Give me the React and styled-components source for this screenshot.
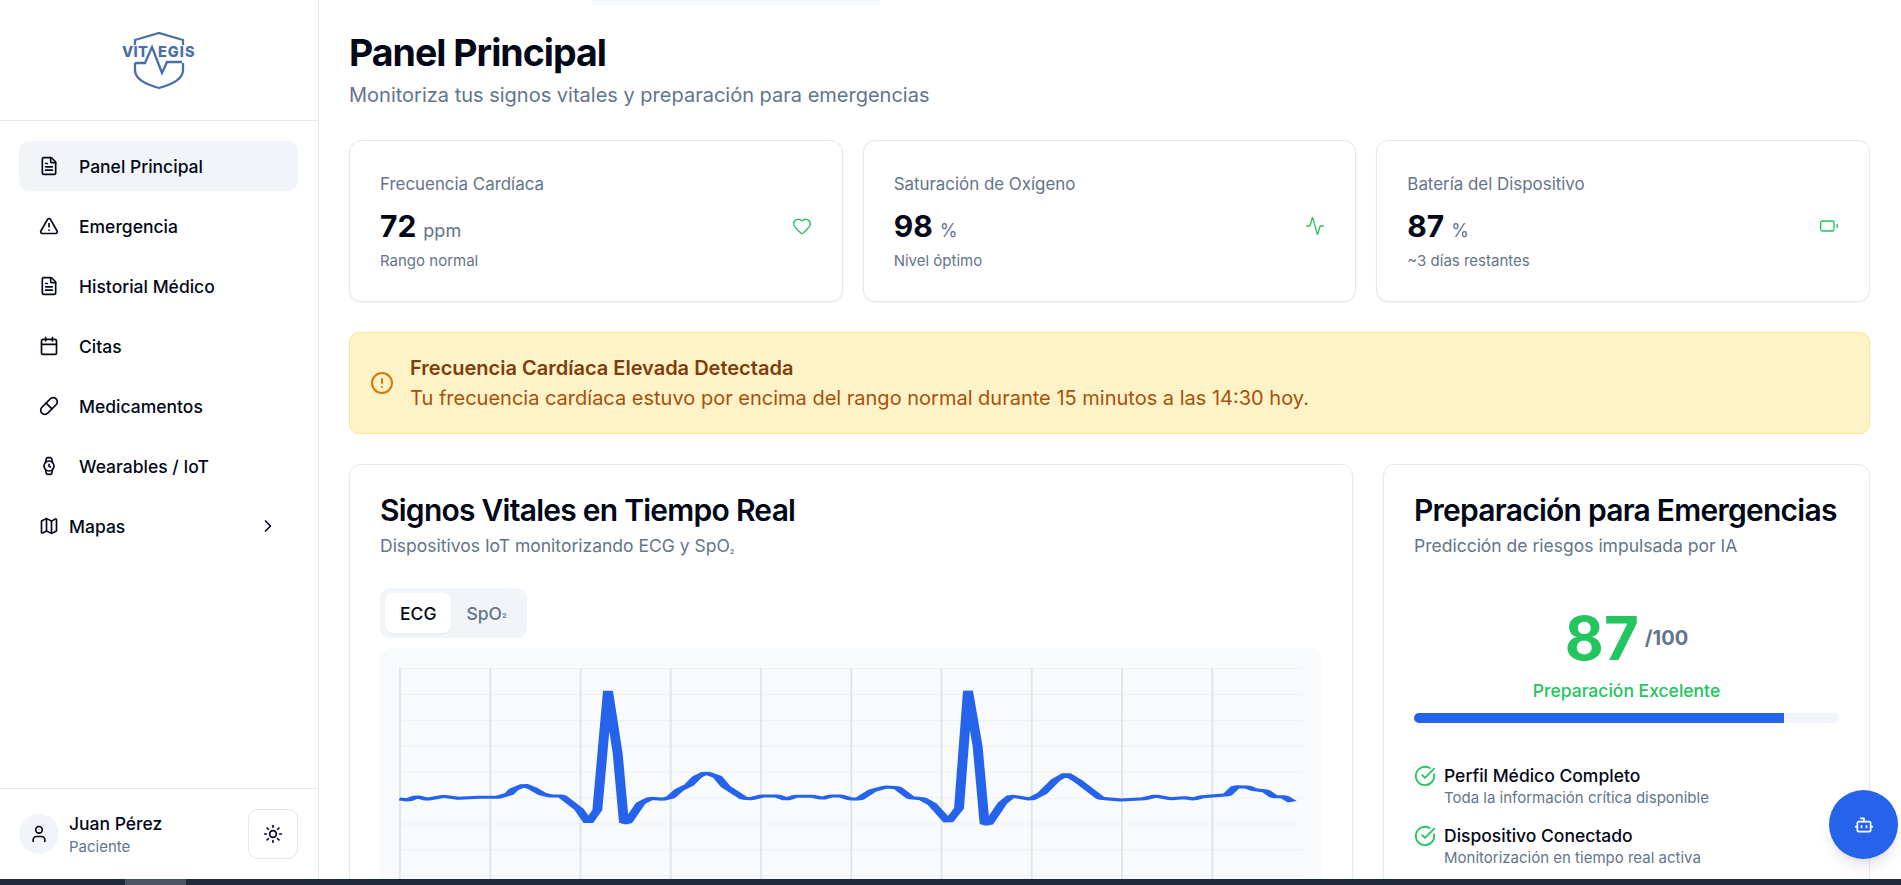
import React from "react";
import styled, { createGlobalStyle } from "styled-components";
import { FileText, TriangleAlert, Calendar, Pill, Watch, Map as MapIcon, ChevronRight, User, Sun, Heart, Activity, Battery, CircleAlert, CircleCheckBig, Bot } from "lucide-react";

const Global = createGlobalStyle`
  * { box-sizing: border-box; }
  html, body { margin: 0; height: 100%; overflow: hidden; background: #fff; }
  body { font-family: Inter, "Noto Sans", sans-serif; color: #020817; }
  #root { height: 100%; }
`;

const Page = styled.div`height: 100vh; display: flex; flex-direction: column; position: relative; overflow: hidden;`;
const Body = styled.div`flex: 1; min-height: 0; display: flex;`;
const BottomBar = styled.div`height: 6px; flex: none; background: #1e293b; padding-left: 125px;`;
const Thumb = styled.div`width: 61px; height: 100%; background: #4b5563;`;

const Sidebar = styled.aside`width: 319px; flex: none; border-right: 1px solid #e2e8f0; display: flex; flex-direction: column;`;
const LogoWrap = styled.div`height: 121px; flex: none; border-bottom: 1px solid #e2e8f0; display: flex; justify-content: center; padding-top: 32px;`;
const Nav = styled.nav`flex: 1; display: flex; flex-direction: column; gap: 10px; padding: 20px 20px 0 19px;`;
const NavItem = styled.div`
  height: 50px; display: flex; align-items: center; gap: ${p => p.$gap || 20}px; padding: 0 20px; border-radius: 10px;
  font-size: 17.5px; font-weight: 500; background: ${p => p.$active ? "#f1f5f9" : "transparent"};
`;
const NavLabel = styled.span`flex: 1;`;
const UserBar = styled.div`height: 91px; flex: none; border-top: 1px solid #e2e8f0; display: flex; align-items: center; justify-content: space-between; padding: 0 20px 0 19px;`;
const UserInfo = styled.div`display: flex; align-items: center; gap: 10px;`;
const Avatar = styled.div`width: 40px; height: 40px; border-radius: 50%; background: #f1f5f9; display: flex; align-items: center; justify-content: center;`;
const UserName = styled.div`margin-top: 2px; font-size: 17.5px; font-weight: 500; line-height: 22px;`;
const UserRole = styled.div`margin-top: 1px; font-size: 15px; line-height: 22px; color: #64748b;`;
const ThemeButton = styled.div`width: 50px; height: 50px; border: 1px solid #e2e8f0; border-radius: 10px; display: flex; align-items: center; justify-content: center;`;

const Main = styled.main`flex: 1; min-width: 0; overflow: hidden; padding: 33px 31px 0 30px;`;
const Title = styled.h1`margin: 0; font-size: 37.5px; line-height: 40px; font-weight: 700; letter-spacing: -1px;`;
const Subtitle = styled.p`margin: 8px 0 31px; font-size: 20px; line-height: 28px; color: #64748b;`;

const Stats = styled.div`display: grid; grid-template-columns: repeat(3, 1fr); gap: 20px;`;
const Card = styled.div`background: #fff; border: 1px solid #e2e8f0; border-radius: 12px; box-shadow: 0 1px 2px rgba(0,0,0,.05); padding: 30px;`;
const StatLabel = styled.div`padding-top: 1px; font-size: 16.9px; line-height: 24px; color: #64748b;`;
const StatRow = styled.div`display: flex; align-items: center; justify-content: space-between; margin-top: 12px;`;
const StatValue = styled.div`display: flex; align-items: baseline; gap: 7px;`;
const StatNumber = styled.span`font-size: 30px; line-height: 36px; font-weight: 700;`;
const StatUnit = styled.span`font-size: 18px; color: #64748b;`;
const StatNote = styled.div`margin-top: 7px; font-size: 15px; line-height: 20px; color: #64748b;`;

const Alert = styled.div`margin-top: 30px; height: 102px; background: #fef3c7; border: 1px solid #fde68a; border-radius: 10px; padding: 20px; display: flex; align-items: center; gap: 16px; color: #d97706;`;
const AlertTitle = styled.div`font-size: 20px; line-height: 30px; font-weight: 600; color: #7f3d0f;`;
const AlertText = styled.div`font-size: 20px; line-height: 30px; color: #a9500c;`;

const Columns = styled.div`margin-top: 30px; display: grid; grid-template-columns: minmax(0, 1fr) 487px; gap: 30px;`;
const SectionTitle = styled.h2`margin: 0; font-size: 30px; line-height: 30px; font-weight: 600; letter-spacing: -0.75px;`;
const SectionSub = styled.p`margin: 9px 0 0; height: 24px; font-size: 17.5px; line-height: 24px; color: #64748b;`;
const Sub2 = styled.span`font-size: 0.6em; line-height: 0;`;

const Tabs = styled.div`display: flex; width: max-content; margin-top: 30px; padding: 5px; height: 50px; background: #f1f5f9; border-radius: 10px;`;
const Tab = styled.div`
  padding: 0 15px; display: flex; align-items: center; border-radius: 8px; font-size: 17.5px; font-weight: 500; white-space: pre;
  color: ${p => p.$active ? "#020817" : "#64748b"}; background: ${p => p.$active ? "#fff" : "transparent"};
  box-shadow: ${p => p.$active ? "0 1px 2px rgba(0,0,0,.05)" : "none"};
`;
const ChartBox = styled.div`margin-top: 10px; background: #f8fafc; border-radius: 12px; padding: 20px 19px;`;
const ChartSvg = styled.svg`display: block; width: 903px; height: 260px;`;

const Score = styled.div`margin-top: 50px; display: flex; align-items: center; justify-content: center; gap: 6px;`;
const ScoreNumber = styled.span`font-size: 60px; line-height: 60px; font-weight: 700; color: #22c55e;`;
const ScoreMax = styled.span`font-size: 20px; line-height: 28px; font-weight: 700; color: #64748b;`;
const ScoreLabel = styled.div`margin-top: 9px; text-align: center; font-size: 17.5px; line-height: 28px; font-weight: 500; color: #22c55e;`;
const Track = styled.div`margin-top: 8px; height: 10px; border-radius: 5px; background: #f1f5f9; overflow: hidden;`;
const Fill = styled.div`height: 100%; background: #2563eb;`;
const CheckList = styled.div`margin-top: 41px; display: flex; flex-direction: column; gap: 16px;`;
const CheckItem = styled.div`display: flex; gap: 8px; color: #22c55e;`;
const CheckIcon = styled.div`height: 24px; display: flex; align-items: center; flex: none;`;
const CheckTitle = styled.div`font-size: 17.5px; line-height: 24px; font-weight: 500; color: #020817;`;
const CheckSub = styled.div`font-size: 15px; line-height: 20px; color: #64748b;`;

const TopStrip = styled.div`position: absolute; top: 0; left: 592px; width: 288px; height: 6px; background: #f5f9fe;`;
const Fab = styled.div`position: absolute; left: 1829px; top: 790px; width: 69px; height: 69px; border-radius: 50%; background: #2563eb; color: #fff; display: flex; align-items: center; justify-content: center; box-shadow: 0 10px 15px -3px rgba(0,0,0,.1), 0 4px 6px -4px rgba(0,0,0,.1);`;

const toZ7 = [[90,657],[118,660],[143,650],[175,658],[225,649],[270,655],[330,652],[385,652],[420,642],[435,628],[465,615],[490,625],[520,642],[545,648],[578,648],[630,688],[658,728],[685,690],[717,332],[746,520],[765,728],[775,728],[815,670],[845,655],[880,658],[905,652],[930,630],[960,615],[985,590],[1010,578],[1045,590],[1070,620],[1125,655],[1145,656],[1180,648],[1225,648],[1252,658],[1280,649],[1330,649],[1360,655],[1385,648],[1415,648],[1445,657],[1470,657]];
const toZ8 = [[70,452],[110,441],[145,443],[185,473],[220,476],[250,493],[298,546],[330,505],[357,152],[386,320],[407,552],[418,552],[460,490],[487,468],[545,478],[580,460],[620,420],[652,402],[690,425],[755,475],[815,480],[885,476],[920,468],[965,476],[1005,473],[1035,477],[1060,470],[1135,464],[1160,440],[1195,441],[1215,449],[1250,453],[1275,470],[1305,470],[1330,485]];
const SX = 3.3;
const VW = 903 / SX;
const ecg = [
  ...toZ7.map(([x, y]) => [370 + x / 3, 580 + y / 3]),
  ...toZ8.map(([x, y]) => [850 + x / 3, 640 + y / 3]),
].map(([x, y]) => `${((x - 400) / SX).toFixed(2)},${(y - 668).toFixed(1)}`).join(" ");

const vLines = Array.from({ length: 10 }, (_, i) => (i * 90.25 + 1) / SX);
const hLines = Array.from({ length: 10 }, (_, i) => i * 25.9 + 0.5);

function EcgChart() {
  return (
    <ChartSvg viewBox={`0 0 ${VW} 260`} preserveAspectRatio="none">
      {hLines.map(y => <line key={y} x1="0" x2={VW} y1={y} y2={y} stroke="#eef0f4" strokeWidth="1" />)}
      {vLines.map(x => <line key={x} x1={x} x2={x} y1="0" y2="260" stroke="#e2e5ea" strokeWidth="0.6" />)}
      <polyline points={ecg} fill="none" stroke="#2563eb" strokeWidth="3" strokeLinejoin="bevel" />
    </ChartSvg>
  );
}

function Logo() {
  const c = "#4a6ea9";
  return (
    <svg width="74" height="58" viewBox="0 0 74 58" fill="none">
      <path d="M13 13V8L37 1L61 8V13" stroke={c} strokeWidth="2.3" />
      <path d="M13 31V38C13 46 22 52 37 56C52 52 61 46 61 38V31" stroke={c} strokeWidth="2.3" />
      <path d="M13 31H23L30 15L40 41L45 30H60" stroke={c} strokeWidth="2.3" />
      <text x="0" y="25" fontFamily="Inter, sans-serif" fontWeight="800" fontSize="14.5" fill={c} letterSpacing="0.3">VIT</text>
      <text x="36" y="25" fontFamily="Inter, sans-serif" fontWeight="800" fontSize="14.5" fill={c} letterSpacing="1">EGIS</text>
    </svg>
  );
}

const navItems = [
  [FileText, "Panel Principal", true],
  [TriangleAlert, "Emergencia"],
  [FileText, "Historial Médico"],
  [Calendar, "Citas"],
  [Pill, "Medicamentos"],
  [Watch, "Wearables / IoT"],
];

const stats = [
  ["Frecuencia Cardíaca", "72", "ppm", "Rango normal", Heart],
  ["Saturación de Oxígeno", "98", "%", "Nivel óptimo", Activity],
  ["Batería del Dispositivo", "87", "%", "~3 días restantes", Battery],
];

const checks = [
  ["Perfil Médico Completo", "Toda la información crítica disponible"],
  ["Dispositivo Conectado", "Monitorización en tiempo real activa"],
];

export default function App() {
  return (
    <Page>
      <Global />
      <Body>
        <Sidebar>
          <LogoWrap><Logo /></LogoWrap>
          <Nav>
            {navItems.map(([Icon, label, active]) => (
              <NavItem key={label} $active={active}><Icon size={20} /><NavLabel>{label}</NavLabel></NavItem>
            ))}
            <NavItem $gap={10}><MapIcon size={20} /><NavLabel>Mapas</NavLabel><ChevronRight size={20} /></NavItem>
          </Nav>
          <UserBar>
            <UserInfo>
              <Avatar><User size={20} /></Avatar>
              <div>
                <UserName>Juan Pérez</UserName>
                <UserRole>Paciente</UserRole>
              </div>
            </UserInfo>
            <ThemeButton><Sun size={20} /></ThemeButton>
          </UserBar>
        </Sidebar>
        <Main>
          <Title>Panel Principal</Title>
          <Subtitle>Monitoriza tus signos vitales y preparación para emergencias</Subtitle>
          <Stats>
            {stats.map(([label, num, unit, note, Icon]) => (
              <Card key={label}>
                <StatLabel>{label}</StatLabel>
                <StatRow>
                  <StatValue><StatNumber>{num}</StatNumber><StatUnit>{unit}</StatUnit></StatValue>
                  <Icon size={20} color="#22c55e" strokeWidth={1.6} />
                </StatRow>
                <StatNote>{note}</StatNote>
              </Card>
            ))}
          </Stats>
          <Alert>
            <CircleAlert size={24} />
            <div>
              <AlertTitle>Frecuencia Cardíaca Elevada Detectada</AlertTitle>
              <AlertText>Tu frecuencia cardíaca estuvo por encima del rango normal durante 15 minutos a las 14:30 hoy.</AlertText>
            </div>
          </Alert>
          <Columns>
            <Card>
              <SectionTitle>Signos Vitales en Tiempo Real</SectionTitle>
              <SectionSub>Dispositivos IoT monitorizando ECG y SpO<Sub2>₂</Sub2></SectionSub>
              <Tabs><Tab $active>ECG</Tab><Tab>SpO<Sub2>₂</Sub2></Tab></Tabs>
              <ChartBox><EcgChart /></ChartBox>
            </Card>
            <Card>
              <SectionTitle>Preparación para Emergencias</SectionTitle>
              <SectionSub>Predicción de riesgos impulsada por IA</SectionSub>
              <Score><ScoreNumber>87</ScoreNumber><ScoreMax>/100</ScoreMax></Score>
              <ScoreLabel>Preparación Excelente</ScoreLabel>
              <Track><Fill style={{ width: "87%" }} /></Track>
              <CheckList>
                {checks.map(([t, s]) => (
                  <CheckItem key={t}>
                    <CheckIcon><CircleCheckBig size={22} /></CheckIcon>
                    <div><CheckTitle>{t}</CheckTitle><CheckSub>{s}</CheckSub></div>
                  </CheckItem>
                ))}
              </CheckList>
            </Card>
          </Columns>
        </Main>
      </Body>
      <BottomBar><Thumb /></BottomBar>
      <TopStrip />
      <Fab><Bot size={20} /></Fab>
    </Page>
  );
}
